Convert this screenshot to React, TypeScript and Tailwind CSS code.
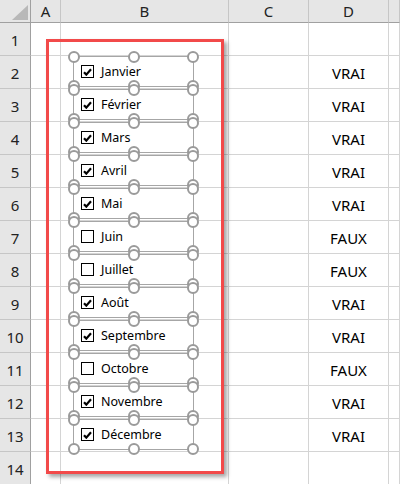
const months = [
  { name: "Janvier", on: true },
  { name: "Février", on: true },
  { name: "Mars", on: true },
  { name: "Avril", on: true },
  { name: "Mai", on: true },
  { name: "Juin", on: false },
  { name: "Juillet", on: false },
  { name: "Août", on: true },
  { name: "Septembre", on: true },
  { name: "Octobre", on: false },
  { name: "Novembre", on: true },
  { name: "Décembre", on: true },
];

const cols = ["A", "B", "C", "D", ""];
const rows = Array.from({ length: 14 }, (_, i) => i + 1);

// selection handle drawn over the control border
const Handle = ({ className }: { className: string }) => (
  <div
    className={`absolute w-[12px] h-[12px] rounded-full border-2 border-[#9a9a9a] bg-white ${className}`}
  />
);

const CheckControl = ({ name, on }: { name: string; on: boolean }) => (
  <div className="relative w-[121px] h-[31px] border border-[#a6a6a6] flex items-center pl-[7px] gap-[7px]">
    <div className="w-[13px] h-[13px] border border-black bg-white flex items-center justify-center">
      {on && (
        <svg width="9" height="8" viewBox="0 0 9 8">
          <path d="M1 4.2 L3.3 6.6 L8 1.2" fill="none" stroke="#000" strokeWidth="2.2" />
        </svg>
      )}
    </div>
    <span className="text-[12.5px] text-black pt-[1px]">{name}</span>
    <Handle className="left-[-6px] top-[-6px]" />
    <Handle className="left-[54px] top-[-6px]" />
    <Handle className="right-[-6px] top-[-6px]" />
    <Handle className="left-[-6px] bottom-[-6px]" />
    <Handle className="left-[54px] bottom-[-6px]" />
    <Handle className="right-[-6px] bottom-[-6px]" />
  </div>
);

export default function App() {
  return (
    <div
      className="relative w-[400px] h-[484px] overflow-hidden bg-white text-black"
      style={{ fontFamily: '"Noto Sans", "Open Sans", sans-serif' }}
    >
      <div className="grid grid-cols-[31px_30px_168px_80px_80px_1fr] grid-rows-[23px_repeat(14,33px)]">
        {/* header row */}
        <div className="bg-[#e6e6e6] border-r border-b border-[#a0a0a0] flex items-end justify-end p-[2px]">
          <svg width="16" height="15" viewBox="0 0 16 15">
            <polygon points="16,0 16,15 0,15" fill="#b8b8b8" />
          </svg>
        </div>
        {cols.map((c, i) => (
          <div
            key={i}
            className="bg-[#e6e6e6] border-r border-r-[#c6c6c6] border-b border-b-[#a0a0a0] flex items-center justify-center text-[15px] text-[#222]"
          >
            {c}
          </div>
        ))}
        {rows.map((r) => (
          <div key={r} className="contents">
            <div className="bg-[#e6e6e6] border-r border-r-[#a0a0a0] border-b border-b-[#c6c6c6] flex items-center justify-center pt-[3px] text-[15px] text-[#222]">
              {r}
            </div>
            {cols.map((c, i) => (
              <div
                key={i}
                className="border-r border-b border-[#d4d4d4] flex items-center justify-center pt-[3px] text-[15px]"
              >
                {c === "D" && r >= 2 && r <= 13
                  ? months[r - 2].on
                    ? "VRAI"
                    : "FAUX"
                  : ""}
              </div>
            ))}
          </div>
        ))}
      </div>

      {/* highlight frame drawn over the sheet */}
      <div className="absolute left-[46px] top-[39px] w-[178px] h-[435px] border-[3px] border-[#f24a4a] shadow-[3px_3px_4px_rgba(0,0,0,0.35)]" />

      {/* form controls floating on the sheet */}
      <div className="absolute left-[73px] top-[56px] flex flex-col gap-[2px]">
        {months.map((m) => (
          <CheckControl key={m.name} name={m.name} on={m.on} />
        ))}
      </div>
    </div>
  );
}
